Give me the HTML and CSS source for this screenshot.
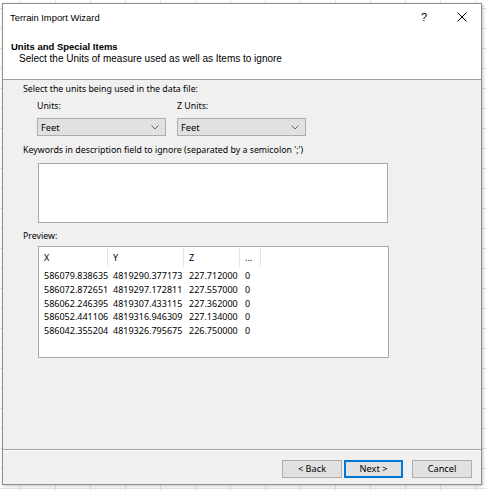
FILE: index.html
```html
<!DOCTYPE html>
<html>
<head>
<meta charset="utf-8">
<link rel="stylesheet" href="styles.css">
</head>
<body>
<div class="dialog">
  <div class="top">
    <div class="titlebar">
      <span class="title">Terrain Import Wizard</span>
      <span class="help">?</span>
      <span class="close">
        <svg width="10" height="10" viewBox="0 0 10 10"><path d="M0.5 0.5 L9.5 9.5 M9.5 0.5 L0.5 9.5" stroke="#000" stroke-width="1" fill="none"/></svg>
      </span>
    </div>
    <div class="wizhead">
      <div class="wiztitle">Units and Special Items</div>
      <div class="wizsub">Select the Units of measure used as well as Items to ignore</div>
    </div>
  </div>
  <div class="content">
    <div class="label l1">Select the units being used in the data file:</div>
    <div class="units">
      <div class="field">
        <div class="label">Units:</div>
        <div class="combo"><span>Feet</span>
          <svg class="chev" width="8" height="5" viewBox="0 0 8 5"><path d="M0.5 0.5 L4 4 L7.5 0.5" stroke="#666" fill="none"/></svg>
        </div>
      </div>
      <div class="field">
        <div class="label">Z Units:</div>
        <div class="combo"><span>Feet</span>
          <svg class="chev" width="8" height="5" viewBox="0 0 8 5"><path d="M0.5 0.5 L4 4 L7.5 0.5" stroke="#666" fill="none"/></svg>
        </div>
      </div>
    </div>
    <div class="label l2">Keywords in description field to ignore (separated by a semicolon ';')</div>
    <div class="textarea"></div>
    <div class="label l3">Preview:</div>
    <div class="preview">
      <div class="grid">
        <div class="hd">X</div><div class="hd">Y</div><div class="hd">Z</div><div class="hd">...</div>
        <div class="c">586079.838635</div><div class="c">4819290.377173</div><div class="c">227.712000</div><div class="c">0</div>
        <div class="c">586072.872651</div><div class="c">4819297.172811</div><div class="c">227.557000</div><div class="c">0</div>
        <div class="c">586062.246395</div><div class="c">4819307.433115</div><div class="c">227.362000</div><div class="c">0</div>
        <div class="c">586052.441106</div><div class="c">4819316.946309</div><div class="c">227.134000</div><div class="c">0</div>
        <div class="c">586042.355204</div><div class="c">4819326.795675</div><div class="c">226.750000</div><div class="c">0</div>
      </div>
    </div>
  </div>
  <div class="footer">
    <div class="btn">&lt; Back</div>
    <div class="btn default">Next &gt;</div>
    <div class="btn cancel">Cancel</div>
  </div>
</div>
</body>
</html>
```
FILE: styles.css
```css
html, body {
  margin: 0;
  padding: 0;
}
body {
  width: 487px;
  height: 491px;
  overflow: hidden;
  background-color: #ffffff;
  background-image:
    repeating-linear-gradient(to right, transparent 0, transparent 20px, #dde5e2 20px, #dde5e2 21px, transparent 21px, transparent 35px),
    repeating-linear-gradient(to bottom, transparent 0, transparent 8px, #dde5e2 8px, #dde5e2 9px, transparent 9px, transparent 20px);
  font-family: "Noto Sans", sans-serif;
  color: #000;
}
.dialog {
  margin: 3px 0 0 2px;
  width: 478px;
  height: 480px;
  border: 1px solid #8f8f8f;
  background: #f0f0f0;
  box-shadow: 1px 1px 3px rgba(0,0,0,0.25);
  display: flex;
  flex-direction: column;
}
.top {
  background: #fff;
  height: 75px;
  border-bottom: 1px solid #a0a0a0;
  font-family: "Liberation Sans", Arial, sans-serif;
}
.titlebar {
  height: 26px;
  display: flex;
  align-items: center;
  padding-left: 7px;
  font-size: 9.4px;
}
.title {
  flex: 1;
}
.help {
  width: 10px;
  font-size: 11px;
  margin-right: 28px;
  text-align: center;
}
.close {
  width: 10px;
  height: 10px;
  margin-right: 14px;
  display: flex;
}
.wizhead {
  padding: 11px 0 0 8px;
}
.wiztitle {
  font-weight: bold;
  font-size: 9.5px;
  line-height: 12px;
}
.wizsub {
  padding-left: 8px;
  font-size: 10px;
  line-height: 12px;
}
.content {
  flex: 1;
  padding: 3px 0 0 20px;
  font-size: 8.8px;
}
.label {
  line-height: 13px;
  height: 13px;
  white-space: nowrap;
}
.units {
  display: flex;
  gap: 11px;
  margin: 4px 0 0 14px;
}
.field .label {
  margin-bottom: 5px;
}
.combo {
  height: 16px;
  border: 1px solid #adadad;
  background: #e1e1e1;
  display: flex;
  align-items: center;
  justify-content: space-between;
  padding: 0 6px 0 3px;
  box-sizing: content-box;
  width: 118px;
  font-size: 9.2px;
}
.chev {
  display: block;
}
.l2 {
  margin-top: 8px;
}
.textarea {
  margin: 6px 0 0 15px;
  width: 348px;
  height: 58px;
  border: 1px solid #a8a8a8;
  background: #fff;
}
.l3 {
  margin-top: 7px;
}
.preview {
  margin: 3px 0 0 15px;
  width: 349px;
  height: 110px;
  border: 1px solid #a8a8a8;
  background: #fff;
  font-size: 9px;
}
.grid {
  display: grid;
  grid-template-columns: 69px 76px 56px 21px;
  grid-template-rows: 21px;
  grid-auto-rows: 13.75px;
  margin-top: 1px;
}
.hd {
  height: 19px;
  line-height: 19px;
  border-right: 1px solid #e5e5e5;
  padding-left: 5px;
}
.c {
  line-height: 13.75px;
  padding-left: 5px;
  white-space: nowrap;
}
.footer {
  height: 35px;
  border-top: 1px solid #a0a0a0;
  box-shadow: inset 0 1px 0 #ffffff;
  display: flex;
  justify-content: flex-end;
  align-items: flex-start;
  padding: 10px 9px 0 0;
  box-sizing: border-box;
}
.btn {
  width: 58px;
  height: 16px;
  border: 1px solid #adadad;
  background: #e1e1e1;
  font-size: 9.2px;
  line-height: 16px;
  text-align: center;
}
.btn.default {
  border-color: #0078d7;
  box-shadow: inset 0 0 0 1px #0078d7;
  margin-left: 2px;
  width: 57px;
}
.btn.cancel {
  margin-left: 9px;
}
```
